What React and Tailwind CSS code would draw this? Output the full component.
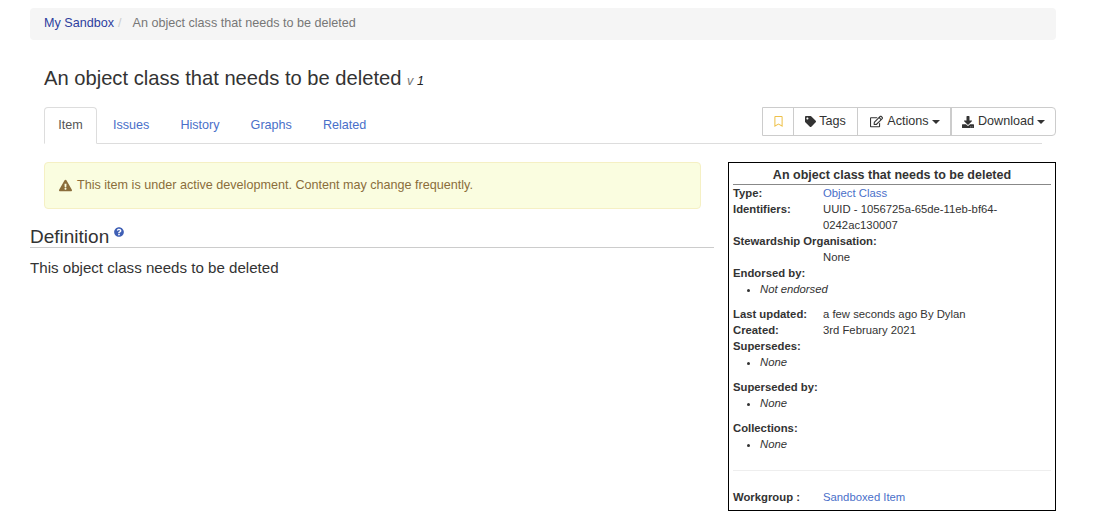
import { FaRegBookmark, FaTag, FaRegEdit, FaDownload, FaExclamationTriangle, FaQuestionCircle } from 'react-icons/fa';

const Caret = () => (
  <span className="inline-block ml-[3px] align-middle border-x-[4px] border-t-[4px] border-x-transparent border-t-[#333]" />
);

const Row = ({ label, children }) => (
  <div className="flex">
    <div className="w-[90px] shrink-0 font-bold">{label}</div>
    <div className="flex-1">{children}</div>
  </div>
);

const ListBlock = ({ label, children, last }) => (
  <div className={last ? '' : 'pb-[9px]'}>
    <div className="font-bold">{label}</div>
    <ul className="list-disc pl-[27px] italic">
      <li>{children}</li>
    </ul>
  </div>
);

export default function App() {
  return (
    <div className="w-[1109px] h-[532px] overflow-hidden bg-white text-[#333] font-['Liberation_Sans',Arial,sans-serif] text-[15px] pl-[30px] pt-2">
      <div className="w-[1026px]">
        <div className="h-8 bg-[#f5f5f5] rounded flex items-center pl-[14px] pb-[2px] text-[12.6px]">
          <a className="text-[#2d3e9e]">My Sandbox</a>
          <span className="text-[#ccc] pl-[4px] pr-[11px]">/</span>
          <span className="text-[#777]">An object class that needs to be deleted</span>
        </div>

        <h1 className="ml-[14px] mt-[25px] text-[20.16px] leading-[26px] h-[27px]">
          An object class that needs to be deleted{' '}
          <small className="text-[12.6px] italic text-[#777]">
            v <span className="text-[#222]">1</span>
          </small>
        </h1>

        <div className="mx-[14px] mt-[15px] flex justify-between border-b border-[#ddd] h-[37px] text-[12.6px]">
          <nav className="flex">
            <a className="h-[37px] w-[53px] flex items-center justify-center bg-white border border-[#ddd] border-b-white rounded-t text-[#555]">Item</a>
            <a className="h-[36px] ml-[16px] mr-[31px] flex items-center text-[#4a6fc9]">Issues</a>
            <a className="h-[36px] mr-[31px] flex items-center text-[#4a6fc9]">History</a>
            <a className="h-[36px] mr-[31px] flex items-center text-[#4a6fc9]">Graphs</a>
            <a className="h-[36px] flex items-center text-[#4a6fc9]">Related</a>
          </nav>
          <div className="-mr-[14px] flex h-[29px] border border-[#ccc] rounded-r text-[12.6px] text-[#333]">
            <button className="w-[31px] flex items-center justify-center border-r border-[#ccc]">
              <FaRegBookmark className="text-[#eec14a] text-[11px]" />
            </button>
            <button className="w-[64px] flex items-center justify-center gap-[3px] border-r border-[#ccc]">
              <FaTag className="text-[11px]" /> Tags
            </button>
            <button className="w-[94px] flex items-center justify-center gap-[4px] pl-[2px] border-r-2 border-[#ccc]">
              <FaRegEdit className="text-[13px]" />
              <span>Actions<Caret /></span>
            </button>
            <button className="flex-1 w-[103px] flex items-center justify-center gap-[4px]">
              <FaDownload className="text-[12px]" />
              <span>Download<Caret /></span>
            </button>
          </div>
        </div>

        <div className="flex mt-[18px]">
          <div className="w-[684px] shrink-0">
            <div className="ml-[14px] w-[657px] h-[47px] flex items-center gap-[5px] pl-[14px] pb-[1px] bg-[#fafde0] border border-[#f5f0c4] rounded text-[12.6px] text-[#8a6d3b]">
              <FaExclamationTriangle className="text-[13px] text-[#8a6d3b]" />
              This item is under active development. Content may change frequently.
            </div>
            <h2 className="mt-[16px] text-[19px] leading-[23px] border-b border-[#ccc] h-[23px] flex">
              Definition
              <FaQuestionCircle className="ml-[5px] mt-[2px] text-[10px] text-[#3f5fb5]" />
            </h2>
            <p className="mt-[9px] text-[15.12px] leading-[21px]">This object class needs to be deleted</p>
          </div>

          <aside className="ml-[14px] w-[328px] h-[349px] border border-black px-[4px] pt-[4px] text-[11.3px] leading-[16px] text-[#333]">
            <div className="text-center font-bold text-[12.5px] leading-[17px] border-b border-[#888]">
              An object class that needs to be deleted
            </div>
            <Row label="Type:"><a className="text-[#4a6fc9]">Object Class</a></Row>
            <Row label="Identifiers:">UUID - 1056725a-65de-11eb-bf64-<br />0242ac130007</Row>
            <div className="font-bold">Stewardship Organisation:</div>
            <div className="pl-[90px]">None</div>
            <div className="pb-[9px]">
              <div className="font-bold">Endorsed by:</div>
              <ul className="list-disc pl-[27px] italic"><li>Not endorsed</li></ul>
            </div>
            <Row label="Last updated:">a few seconds ago By Dylan</Row>
            <Row label="Created:">3rd February 2021</Row>
            <ListBlock label="Supersedes:">None</ListBlock>
            <ListBlock label="Superseded by:">None</ListBlock>
            <ListBlock label="Collections:" last>None</ListBlock>
            <div className="border-t border-[#eee] mt-[18px] pt-[18px]">
              <Row label="Workgroup :"><a className="text-[#4a6fc9]">Sandboxed Item</a></Row>
            </div>
          </aside>
        </div>
      </div>
    </div>
  );
}
